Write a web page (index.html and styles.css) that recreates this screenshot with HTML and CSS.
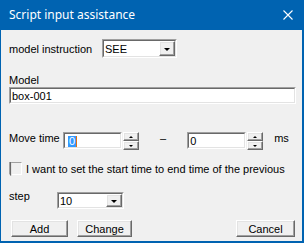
FILE: index.html
```html
<!DOCTYPE html>
<html lang="en">
<head>
  <meta charset="UTF-8" />
  <title>Script input assistance</title>
  <link rel="stylesheet" href="styles.css">
</head>
<body>
  <div class="window">
    <div class="titlebar">
      <span class="title">Script input assistance</span>
      <svg class="close" width="10" height="10" viewBox="0 0 10 10">
        <path d="M0.5 0.5 L9.5 9.5 M9.5 0.5 L0.5 9.5" stroke="#fff" stroke-width="1.1" fill="none"/>
      </svg>
    </div>

    <div class="client">
      <div class="row row-instruction">
        <span class="label label-instruction">model instruction</span>
        <div class="combo combo-instruction">
          <div class="combo-inner">
            <span class="combo-value">SEE</span>
            <span class="drop-btn"><i class="arrow-down"></i></span>
          </div>
        </div>
      </div>

      <div class="label label-model">Model</div>
      <div class="textbox textbox-model">
        <div class="textbox-inner">box-001</div>
      </div>

      <div class="row row-move">
        <span class="label label-move">Move time</span>
        <div class="spin">
          <div class="textbox spin-field">
            <div class="textbox-inner"><span class="selected">0</span></div>
          </div>
          <div class="spin-btns">
            <span class="spin-btn"><i class="arrow-up"></i></span>
            <span class="spin-btn"><i class="arrow-down small"></i></span>
          </div>
        </div>
        <span class="dash">–</span>
        <div class="spin">
          <div class="textbox spin-field">
            <div class="textbox-inner">0</div>
          </div>
          <div class="spin-btns">
            <span class="spin-btn"><i class="arrow-up"></i></span>
            <span class="spin-btn"><i class="arrow-down small"></i></span>
          </div>
        </div>
        <span class="label unit">ms</span>
      </div>

      <div class="row row-check">
        <span class="checkbox"><span class="checkbox-inner"></span></span>
        <span class="label">I want to set the start time to end time of the previous</span>
      </div>

      <div class="row row-step">
        <span class="label label-step">step</span>
        <div class="combo combo-step">
          <div class="combo-inner">
            <span class="combo-value">10</span>
            <span class="drop-btn"><i class="arrow-down"></i></span>
          </div>
        </div>
      </div>

      <div class="row row-buttons">
        <button class="btn btn-add">Add</button>
        <button class="btn btn-change">Change</button>
        <button class="btn btn-cancel">Cancel</button>
      </div>
    </div>
  </div>
</body>
</html>
```

FILE: styles.css
```css
* {
  box-sizing: border-box;
}

body {
  margin: 0;
  width: 304px;
  height: 243px;
  overflow: hidden;
  font-family: "Liberation Sans", Arial, sans-serif;
  font-size: 11px;
  color: #000;
}

.window {
  width: 304px;
  height: 243px;
  background: #0063b1;
  padding: 0 2px 2px 1px;
  display: flex;
  flex-direction: column;
}

.titlebar {
  height: 30px;
  flex: none;
  display: flex;
  align-items: center;
  justify-content: space-between;
  padding: 0 9px 1px 8px;
  color: #fff;
}

.title {
  font-family: "Noto Sans", "Open Sans", sans-serif;
  font-size: 12px;
}

.close {
  display: block;
  margin-top: 1px;
}

.client {
  flex: 1;
  background: #f0f0f0;
  padding: 9px 6px 0 8px;
}

.row {
  display: flex;
  align-items: center;
}

.label {
  line-height: 12px;
  white-space: nowrap;
}

/* sunken 3d borders */
.textbox,
.combo,
.checkbox {
  border: 1px solid;
  border-color: #a0a0a0 #fff #fff #a0a0a0;
}

.textbox-inner,
.combo-inner,
.checkbox-inner {
  height: 100%;
  border: 1px solid;
  border-color: #696969 #e3e3e3 #e3e3e3 #696969;
  background: #fff;
}

/* raised 3d borders */
.drop-btn,
.spin-btn,
.btn {
  background: #f0f0f0;
  border: 1px solid;
  border-color: #fff #696969 #696969 #fff;
  box-shadow: inset -1px -1px #a0a0a0, inset 1px 1px #e3e3e3;
  display: flex;
  align-items: center;
  justify-content: center;
}

.arrow-down {
  display: block;
  width: 0;
  height: 0;
  border-left: 3px solid transparent;
  border-right: 3px solid transparent;
  border-top: 3px solid #000;
  margin-top: 1px;
}

.arrow-up {
  display: block;
  width: 0;
  height: 0;
  border-left: 2px solid transparent;
  border-right: 2px solid transparent;
  border-bottom: 2px solid #000;
}

.arrow-down.small {
  border-left-width: 2px;
  border-right-width: 2px;
  border-top-width: 2px;
  margin-top: 0;
}

.row-instruction {
  height: 19px;
}

.label-instruction {
  width: 93px;
}

.combo {
  height: 19px;
}

.combo-inner {
  display: flex;
  align-items: center;
  justify-content: space-between;
  padding-left: 1px;
}

.combo-value {
  line-height: 12px;
}

.drop-btn {
  width: 16px;
  height: 100%;
}

.combo-instruction {
  width: 75px;
}

.label-model {
  margin-top: 16px;
}

.textbox-model {
  margin-top: 1px;
  height: 17px;
}

.textbox-inner {
  padding: 1px 0 0 1px;
  line-height: 12px;
}

.row-move {
  margin-top: 28px;
  height: 18px;
  align-items: flex-start;
}

.row-move .label {
  margin-top: 0;
}

.label-move {
  width: 54px;
}

.spin {
  display: flex;
  gap: 1px;
}

.spin-field {
  width: 59px;
  height: 17px;
}

.spin-btns {
  display: flex;
  flex-direction: column;
  width: 16px;
}

.spin-btn {
  height: 9px;
}

.selected {
  display: inline-block;
  margin-left: 2px;
  padding: 0 1px;
  background: #3399ff;
  color: #fff;
  border-right: 1px solid #e07010;
  line-height: 11px;
}

.dash {
  margin: 0 21px 0 21px;
  line-height: 12px;
}

.unit {
  margin-left: 11px;
}

.row-check {
  margin-top: 12px;
  height: 13px;
  gap: 4px;
}

.checkbox {
  width: 13px;
  height: 13px;
}

.row-step {
  margin-top: 17px;
  height: 17px;
  align-items: flex-start;
}

.label-step {
  width: 48px;
  margin-top: -2px;
}

.combo-step {
  width: 67px;
  height: 17px;
}

.row-buttons {
  margin-top: 11px;
}

.btn {
  height: 17px;
  padding: 0;
  font-family: inherit;
  font-size: 11px;
  color: #000;
  line-height: 12px;
}

.btn-add {
  width: 57px;
  margin-left: 2px;
}

.btn-change {
  width: 55px;
  margin-left: 9px;
}

.btn-cancel {
  width: 59px;
  margin-left: auto;
  margin-right: 1px;
}
```
